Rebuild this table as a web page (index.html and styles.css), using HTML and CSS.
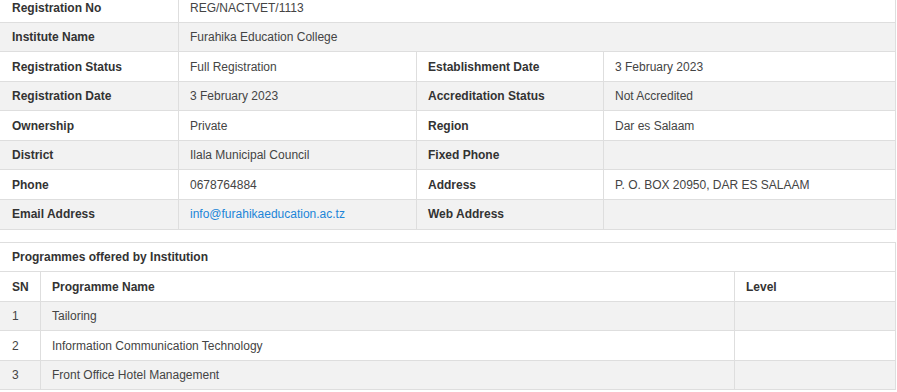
FILE: index.html
```html
<!DOCTYPE html>
<html>
<head>
<meta charset="utf-8">
<link rel="stylesheet" href="styles.css">
</head>
<body>
<div class="page">
  <table class="grid info">
    <colgroup>
      <col class="c1"><col class="c2"><col class="c3"><col class="c4">
    </colgroup>
    <tbody>
      <tr><th>Registration No</th><td colspan="3">REG/NACTVET/1113</td></tr>
      <tr><th>Institute Name</th><td colspan="3">Furahika Education College</td></tr>
      <tr><th>Registration Status</th><td>Full Registration</td><th>Establishment Date</th><td>3 February 2023</td></tr>
      <tr><th>Registration Date</th><td>3 February 2023</td><th>Accreditation Status</th><td>Not Accredited</td></tr>
      <tr><th>Ownership</th><td>Private</td><th>Region</th><td>Dar es Salaam</td></tr>
      <tr><th>District</th><td>Ilala Municipal Council</td><th>Fixed Phone</th><td></td></tr>
      <tr><th>Phone</th><td>0678764884</td><th>Address</th><td>P. O. BOX 20950, DAR ES SALAAM</td></tr>
      <tr><th>Email Address</th><td><a class="link" href="#">info@furahikaeducation.ac.tz</a></td><th>Web Address</th><td></td></tr>
    </tbody>
  </table>

  <table class="grid programmes">
    <colgroup>
      <col class="p1"><col class="p2"><col class="p3">
    </colgroup>
    <thead>
      <tr><th colspan="3">Programmes offered by Institution</th></tr>
      <tr><th>SN</th><th>Programme Name</th><th>Level</th></tr>
    </thead>
    <tbody>
      <tr><td>1</td><td>Tailoring</td><td></td></tr>
      <tr><td>2</td><td>Information Communication Technology</td><td></td></tr>
      <tr><td>3</td><td>Front Office Hotel Management</td><td></td></tr>
    </tbody>
  </table>
</div>
</body>
</html>
```

FILE: styles.css
```css
html, body {
  margin: 0;
  padding: 0;
  background: #ffffff;
}

body {
  font-family: "Liberation Sans", Arial, sans-serif;
  font-size: 12px;
  line-height: 18.57px;
  color: #444;
  overflow: hidden;
}

.page {
  margin-top: -8px;
  margin-left: -1px;
  width: 897px;
}

.grid {
  width: 897px;
  border-collapse: collapse;
  border-spacing: 0;
  table-layout: fixed;
  border: 1px solid #dedede;
  background: #fff;
}

.grid th,
.grid td {
  border: 1px solid #dedede;
  padding: 5.5px 10px 4.5px 11px;
  text-align: left;
  vertical-align: top;
  height: 18px;
}

.grid tr > :first-child {
  padding-left: 12px;
}

.grid th {
  font-weight: bold;
  color: #333;
}

.grid td {
  font-weight: normal;
  color: #444;
}

.info tbody tr:nth-child(even) th,
.info tbody tr:nth-child(even) td {
  background: #f2f2f2;
}

.programmes tbody tr:nth-child(odd) td {
  background: #f2f2f2;
}

.info {
  margin-bottom: 12px;
}

.c1 { width: 179px; }
.c2 { width: 238px; }
.c3 { width: 187px; }
.c4 { width: 292px; }

.p1 { width: 41px; }
.p2 { width: 694px; }
.p3 { width: 161px; }

.link {
  color: #2185d8;
  text-decoration: none;
}
```
